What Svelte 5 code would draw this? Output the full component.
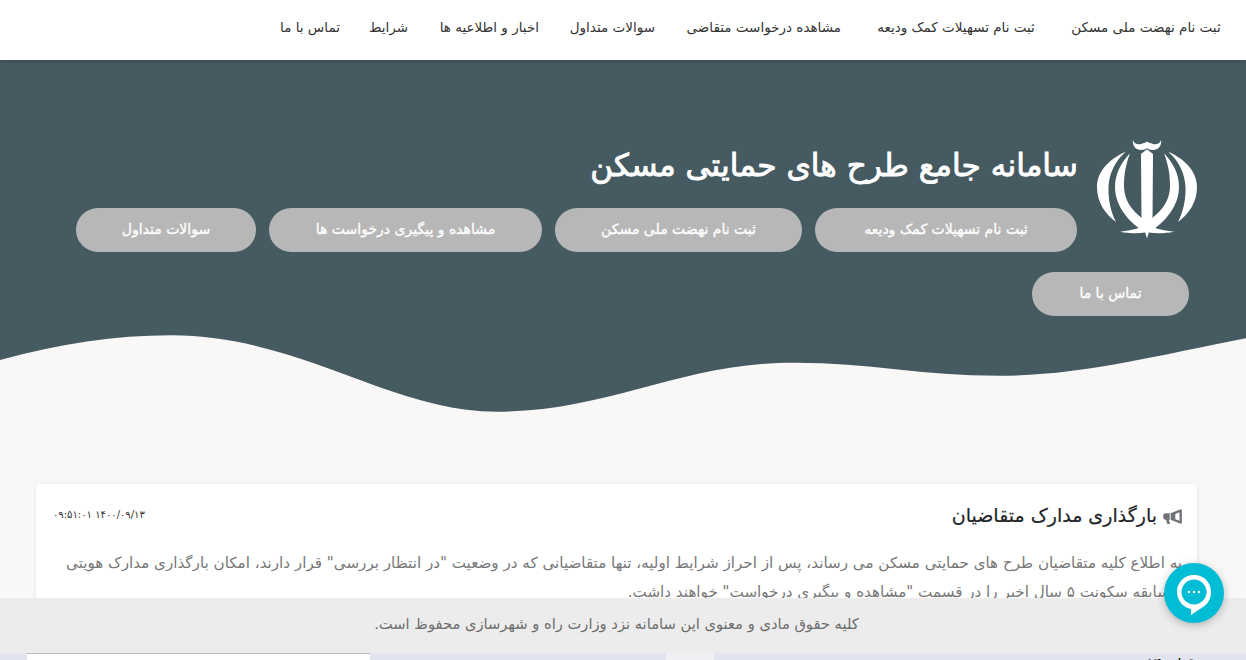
<script>
  const navItems = [
    'ثبت نام نهضت ملی مسکن',
    'ثبت نام تسهیلات کمک ودیعه',
    'مشاهده درخواست متقاضی',
    'سوالات متداول',
    'اخبار و اطلاعیه ها',
    'شرایط',
    'تماس با ما'
  ];
  const heroButtons = [
    'ثبت نام تسهیلات کمک ودیعه',
    'ثبت نام نهضت ملی مسکن',
    'مشاهده و پیگیری درخواست ها',
    'سوالات متداول',
    'تماس با ما'
  ];
</script>

<div class="page" dir="rtl">
  <nav class="topbar">
    {#each navItems as item}
      <span class="nav-item">{item}</span>
    {/each}
  </nav>

  <section class="hero">
    <div class="hero-inner">
      <svg class="emblem" viewBox="0 0 100 100" aria-hidden="true">
        <g fill="#fff">
          <path d="M36 0 C37 4 41 5 44 4 C47 3 49 2.5 50 1.5 C51 2.5 53 3 56 4 C59 5 63 4 64 0 C65 6 61 10 56 10 C53 10 51 9 50 8 C49 9 47 10 44 10 C39 10 35 6 36 0 Z"/>
          <path d="M50 9.3 L56 14 L55.5 80 L50 98.5 L44.5 80 L44 14 Z"/>
          <path d="M28.7 11.7 C10 20 0 33 0 47 C0 62 8 74 19 82 C14 72 11 60 11.5 47 C12 34 18 21 28.7 11.7 Z"/>
          <path d="M71.3 11.7 C90 20 100 33 100 47 C100 62 92 74 81 82 C86 72 89 60 88.5 47 C88 34 82 21 71.3 11.7 Z"/>
          <path d="M33 13.3 C23 24 18 35 18 47 C18 66 32 82 46 91 L50 88 L46 79 C34 70 27.5 60 27 47 C26.7 35 29 24 33 13.3 Z"/>
          <path d="M67 13.3 C77 24 82 35 82 47 C82 66 68 82 54 91 L50 88 L54 79 C66 70 72.5 60 73 47 C73.3 35 71 24 67 13.3 Z"/>
          <path d="M23 91.7 C32 90.5 41 89 47 86 L53 86 C59 89 68 90.5 77 91.7 C68 93.5 59 93.5 52 92.5 L48 92.5 C41 93.5 32 93.5 23 91.7 Z"/>
        </g>
      </svg>
      <h1>سامانه جامع طرح های حمایتی مسکن</h1>
      <div class="hero-buttons">
        {#each heroButtons as label}
          <span class="pill">{label}</span>
        {/each}
      </div>
    </div>
    <svg class="wave" viewBox="0 0 1246 80" preserveAspectRatio="none" aria-hidden="true">
      <path fill="#f9f8f7" d="M0 28 C60 12 115 3.3 171 3.3 C300 3.3 390 79.7 497 79.7 C610 79.7 680 30.7 794 30.7 C870 30.7 920 43.7 1000 43.7 C1080 43.7 1150 25 1246 6.3 L1246 80 L0 80 Z"/>
    </svg>
  </section>

  <main class="content">
    <article class="card">
      <header class="card-head">
        <h2>
          <svg class="horn" viewBox="0 0 20 16" aria-hidden="true">
            <path fill="#6f7378" fill-rule="evenodd" d="M20 0.5 L20 15.5 L18 15.5 L8 11.5 L8 4.5 L18 0.5 Z M17.5 3.5 L13 5.2 L13 10.8 L17.5 12.5 Z M2.5 4.5 L7 4.5 L7 11.5 L6 11.5 L7.5 16 L4.5 16 L3 11.5 L2.5 11.5 C1 11.5 0 10 0 8 C0 6 1 4.5 2.5 4.5 Z"/>
          </svg>
          بارگذاری مدارک متقاضیان
        </h2>
        <time dir="ltr">۰۹:۵۱:۰۱ ۱۴۰۰/۰۹/۱۳</time>
      </header>
      <p>به اطلاع کلیه متقاضیان طرح های حمایتی مسکن می رساند، پس از احراز شرایط اولیه، تنها متقاضیانی که در وضعیت "در انتظار بررسی" قرار دارند، امکان بارگذاری مدارک هویتی<br>و سابقه سکونت ۵ سال اخیر را در قسمت "مشاهده و پیگیری درخواست" خواهند داشت.</p>
    </article>
  </main>

  <footer class="copyright">
    <div class="copyright-text">کلیه حقوق مادی و معنوی این سامانه نزد وزارت راه و شهرسازی محفوظ است.</div>
    <div class="strip" dir="ltr">
      <div class="strip-box"></div>
      <div class="strip-light"></div>
      <div class="strip-date">۱۴۰۰/۰۹</div>
    </div>
  </footer>

  <div class="chat">
    <svg viewBox="0 0 36 42" width="36" height="42" aria-hidden="true">
      <path fill="#fff" d="M18 1 C8 1 1 8.5 1 18 C1 27 8 34 15 35 L15 41 L27 33 C32 30 35 24.5 35 18 C35 8.5 28 1 18 1 Z"/>
      <circle cx="18" cy="18" r="12.5" fill="#00bcd4"/>
      <circle cx="13" cy="18" r="1.2" fill="#fff"/>
      <circle cx="18" cy="18" r="1.2" fill="#fff"/>
      <circle cx="23" cy="18" r="1.2" fill="#fff"/>
    </svg>
  </div>
</div>

<style>
  :global(body) {
    margin: 0;
    background: #f9f8f7;
    overflow: hidden;
  }

  .page {
    height: 660px;
    overflow: hidden;
    position: relative;
    font-family: "DejaVu Sans", "Noto Sans", sans-serif;
  }

  .topbar {
    height: 54px;
    background: #fff;
    display: flex;
    align-items: center;
    gap: 33px;
    padding: 0 25px 6px;
    box-shadow: 0 1px 4px rgba(0, 0, 0, 0.2);
    position: relative;
    z-index: 1;
  }

  .nav-item {
    flex: none;
    font-size: 13.5px;
    color: #333;
    white-space: nowrap;
    text-align: center;
  }

  .nav-item:nth-child(1) { width: 150px; }
  .nav-item:nth-child(2) { width: 164px; }
  .nav-item:nth-child(3) { width: 153px; }
  .nav-item:nth-child(4) { width: 83px; }
  .nav-item:nth-child(5) { width: 98px; }
  .nav-item:nth-child(6) { width: 35px; }
  .nav-item:nth-child(7) { width: 60px; }

  .hero {
    background: #465a62;
    height: 352px;
    display: flex;
    flex-direction: column;
  }

  .hero-inner {
    flex: 1;
    min-height: 0;
    padding: 80px 49px 0 49px;
  }

  .emblem {
    float: right;
    width: 100px;
    height: 100px;
    margin-left: 19px;
  }

  h1 {
    margin: 0;
    padding-top: 2px;
    font-size: 31.2px;
    line-height: 46px;
    color: #fff;
    font-weight: 400;
    -webkit-text-stroke: 0.9px #fff;
  }

  .hero-buttons {
    margin-top: 20px;
    font-size: 0;
  }

  .pill {
    display: inline-block;
    vertical-align: top;
    box-sizing: border-box;
    height: 44px;
    line-height: 42px;
    margin: 0 0 20px 13px;
    border-radius: 22px;
    background: #b7b7b7;
    color: #fff;
    font-size: 14px;
    -webkit-text-stroke: 0.3px #fff;
    text-align: center;
    white-space: nowrap;
  }

  .pill:nth-child(1) { width: 262px; margin-right: 1px; }
  .pill:nth-child(2) { width: 247px; }
  .pill:nth-child(3) { width: 273px; }
  .pill:nth-child(4) { width: 180px; }
  .pill:nth-child(5) { width: 157px; margin-right: 8px; }

  .wave {
    display: block;
    flex: none;
    width: 100%;
    height: 80px;
  }

  .content {
    padding: 72px 49px 0 36px;
  }

  .card {
    background: #fff;
    border-radius: 4px;
    box-shadow: 0 1px 4px rgba(0, 0, 0, 0.1);
    padding: 16px 15px;
    height: 200px;
  }

  .card-head {
    display: flex;
    justify-content: space-between;
    align-items: flex-start;
  }

  h2 {
    margin: 0;
    font-size: 19px;
    line-height: 30px;
    font-weight: 400;
    color: #212529;
    -webkit-text-stroke: 0.2px #212529;
  }

  .horn {
    width: 19px;
    height: 15px;
    vertical-align: -2px;
  }

  time {
    font-size: 10px;
    color: #333;
    line-height: 18px;
    margin-top: 6px;
    margin-left: 2px;
  }

  p {
    margin: 19px 0 0;
    font-size: 15.15px;
    line-height: 29px;
    color: #777;
    white-space: nowrap;
  }

  .copyright {
    position: absolute;
    left: 0;
    right: 0;
    top: 598px;
    height: 62px;
    background: #ececec;
    z-index: 2;
  }

  .copyright-text {
    height: 55px;
    line-height: 52px;
    text-align: center;
    font-size: 14.7px;
    color: #6c6c6c;
    padding-right: 13px;
  }

  .strip {
    height: 7px;
    background: #e1e3ef;
    overflow: hidden;
    display: flex;
    padding-left: 27px;
  }

  .strip-box {
    box-sizing: border-box;
    width: 343px;
    background: #fff;
    border-top: 1px solid #bbb;
  }

  .strip-light {
    width: 48px;
    background: #f0f0f4;
    margin-left: 296px;
  }

  .strip-date {
    margin-left: auto;
    margin-right: 51px;
    margin-top: 3px;
    font-size: 12px;
    line-height: 14px;
    font-weight: 700;
    color: #000;
  }

  .chat {
    position: absolute;
    left: 1164px;
    top: 563px;
    width: 60px;
    height: 60px;
    border-radius: 50%;
    background: #00bcd4;
    box-shadow: 0 2px 8px rgba(0, 0, 0, 0.25);
    display: flex;
    align-items: center;
    justify-content: center;
    z-index: 3;
  }

  .chat svg {
    margin-top: 4px;
  }
</style>
